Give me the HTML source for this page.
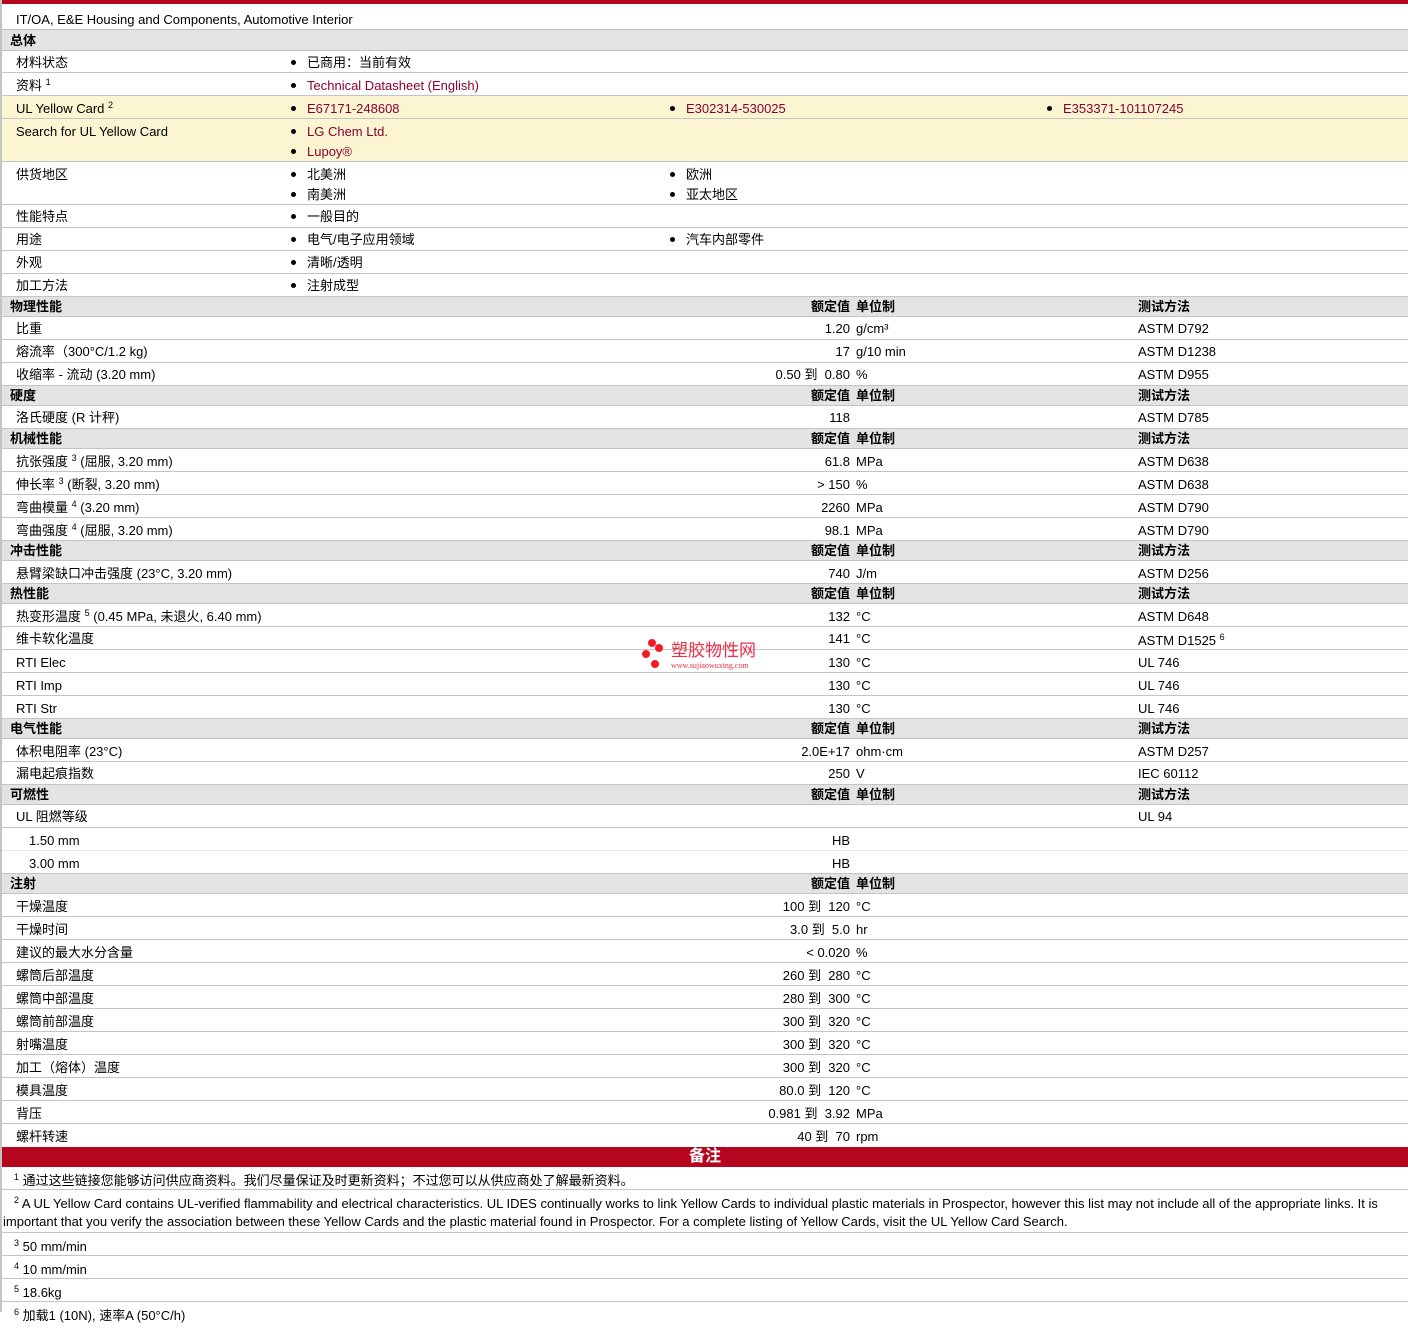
<!DOCTYPE html><html><head><meta charset="utf-8"><style>
body{margin:0;width:1408px;height:1312px;overflow:hidden;background:#fff;font-family:"Liberation Sans","Noto Sans CJK SC",sans-serif;font-size:13px;color:#000;position:relative}
.r{position:absolute;left:2px;right:0;border-bottom:1px solid #c4c4c4;box-sizing:border-box}
.r span{position:absolute;white-space:nowrap}
.h{background:#e3e3e3;font-weight:bold}
.y{background:#fbf5d2}
.l{left:14px}.hl{left:8px}
.b1{left:289px}.b2{left:668px}.b3{left:1045px}
.v{right:558px;text-align:right}.u{left:854px}.t{left:1136px}
a,.a{color:#8b0030}
sup{font-size:9px;vertical-align:5px;line-height:0}
.d::before{content:"";display:inline-block;width:5px;height:5px;border-radius:50%;background:#000;margin-right:11px;vertical-align:2px}
</style></head><body>
<div style="position:absolute;left:0;top:0;width:1408px;height:4px;background:#b5051f"></div>
<div style="position:absolute;left:0;top:0;width:2px;height:1312px;background:#c4c4c4"></div>
<div class="r" style="top:4px;height:26px;line-height:31px"><span class="l">IT/OA, E&amp;E Housing and Components, Automotive Interior</span></div>
<div class="r h" style="top:30px;height:21px;line-height:21px"><span class="hl">总体</span></div>
<div class="r" style="top:51px;height:22px;line-height:23px"><span class="l">材料状态</span><span class="b1 d">已商用：当前有效</span></div>
<div class="r" style="top:73px;height:23px;line-height:25px"><span class="l">资料 <sup>1</sup></span><span class="b1 d"><span class="a" style="position:static">Technical Datasheet (English)</span></span></div>
<div class="r y" style="top:96px;height:23px;line-height:25px"><span class="l">UL Yellow Card <sup>2</sup></span><span class="b1 d"><span class="a" style="position:static">E67171-248608</span></span><span class="b2 d"><span class="a" style="position:static">E302314-530025</span></span><span class="b3 d"><span class="a" style="position:static">E353371-101107245</span></span></div>
<div class="r y" style="top:119px;height:43px;line-height:20px"><span class="l" style="top:3px">Search for UL Yellow Card</span><span class="b1 d" style="top:3px"><span class="a" style="position:static">LG Chem Ltd.</span></span><span class="b1 d" style="top:23px"><span class="a" style="position:static">Lupoy®</span></span></div>
<div class="r" style="top:162px;height:43px;line-height:20px"><span class="l" style="top:3px">供货地区</span><span class="b1 d" style="top:3px">北美洲</span><span class="b1 d" style="top:23px">南美洲</span><span class="b2 d" style="top:3px">欧洲</span><span class="b2 d" style="top:23px">亚太地区</span></div>
<div class="r" style="top:205px;height:23px;line-height:24px"><span class="l">性能特点</span><span class="b1 d">一般目的</span></div>
<div class="r" style="top:228px;height:23px;line-height:24px"><span class="l">用途</span><span class="b1 d">电气/电子应用领域</span><span class="b2 d">汽车内部零件</span></div>
<div class="r" style="top:251px;height:23px;line-height:24px"><span class="l">外观</span><span class="b1 d">清晰/透明</span></div>
<div class="r" style="top:274px;height:23px;line-height:24px"><span class="l">加工方法</span><span class="b1 d">注射成型</span></div>

<div class="r h" style="top:297px;height:20px;line-height:19px"><span class="hl">物理性能</span><span class="v">额定值</span><span class="u">单位制</span><span class="t">测试方法</span></div>
<div class="r" style="top:317px;height:23px;line-height:24px"><span class="l">比重</span><span class="v">1.20</span><span class="u">g/cm³</span><span class="t">ASTM D792</span></div>
<div class="r" style="top:340px;height:23px;line-height:24px"><span class="l">熔流率（300°C/1.2 kg)</span><span class="v">17</span><span class="u">g/10 min</span><span class="t">ASTM D1238</span></div>
<div class="r" style="top:363px;height:23px;line-height:24px"><span class="l">收缩率 - 流动 (3.20 mm)</span><span class="v">0.50 到 &nbsp;0.80</span><span class="u">%</span><span class="t">ASTM D955</span></div>
<div class="r h" style="top:386px;height:20px;line-height:19px"><span class="hl">硬度</span><span class="v">额定值</span><span class="u">单位制</span><span class="t">测试方法</span></div>
<div class="r" style="top:406px;height:23px;line-height:24px"><span class="l">洛氏硬度 (R 计秤)</span><span class="v">118</span><span class="t">ASTM D785</span></div>
<div class="r h" style="top:429px;height:20px;line-height:19px"><span class="hl">机械性能</span><span class="v">额定值</span><span class="u">单位制</span><span class="t">测试方法</span></div>
<div class="r" style="top:449px;height:23px;line-height:26px"><span class="l">抗张强度 <sup>3</sup> (屈服, 3.20 mm)</span><span class="v">61.8</span><span class="u">MPa</span><span class="t">ASTM D638</span></div>
<div class="r" style="top:472px;height:23px;line-height:26px"><span class="l">伸长率 <sup>3</sup> (断裂, 3.20 mm)</span><span class="v">&gt; 150</span><span class="u">%</span><span class="t">ASTM D638</span></div>
<div class="r" style="top:495px;height:23px;line-height:26px"><span class="l">弯曲模量 <sup>4</sup> (3.20 mm)</span><span class="v">2260</span><span class="u">MPa</span><span class="t">ASTM D790</span></div>
<div class="r" style="top:518px;height:23px;line-height:26px"><span class="l">弯曲强度 <sup>4</sup> (屈服, 3.20 mm)</span><span class="v">98.1</span><span class="u">MPa</span><span class="t">ASTM D790</span></div>
<div class="r h" style="top:541px;height:20px;line-height:19px"><span class="hl">冲击性能</span><span class="v">额定值</span><span class="u">单位制</span><span class="t">测试方法</span></div>
<div class="r" style="top:561px;height:23px;line-height:25px"><span class="l">悬臂梁缺口冲击强度 (23°C, 3.20 mm)</span><span class="v">740</span><span class="u">J/m</span><span class="t">ASTM D256</span></div>
<div class="r h" style="top:584px;height:20px;line-height:19px"><span class="hl">热性能</span><span class="v">额定值</span><span class="u">单位制</span><span class="t">测试方法</span></div>
<div class="r" style="top:604px;height:23px;line-height:26px"><span class="l">热变形温度 <sup>5</sup> (0.45 MPa, 未退火, 6.40 mm)</span><span class="v">132</span><span class="u">°C</span><span class="t">ASTM D648</span></div>
<div class="r" style="top:627px;height:23px;line-height:23px"><span class="l">维卡软化温度</span><span class="v">141</span><span class="u">°C</span><span class="t" style="top:2px">ASTM D1525 <sup>6</sup></span></div>
<div class="r" style="top:650px;height:23px;line-height:25px"><span class="l">RTI Elec</span><span class="v">130</span><span class="u">°C</span><span class="t">UL 746</span></div>
<div class="r" style="top:673px;height:23px;line-height:25px"><span class="l">RTI Imp</span><span class="v">130</span><span class="u">°C</span><span class="t">UL 746</span></div>
<div class="r" style="top:696px;height:23px;line-height:25px"><span class="l">RTI Str</span><span class="v">130</span><span class="u">°C</span><span class="t">UL 746</span></div>
<div class="r h" style="top:719px;height:20px;line-height:19px"><span class="hl">电气性能</span><span class="v">额定值</span><span class="u">单位制</span><span class="t">测试方法</span></div>
<div class="r" style="top:739px;height:23px;line-height:25px"><span class="l">体积电阻率 (23°C)</span><span class="v">2.0E+17</span><span class="u">ohm·cm</span><span class="t">ASTM D257</span></div>
<div class="r" style="top:762px;height:23px;line-height:24px"><span class="l">漏电起痕指数</span><span class="v">250</span><span class="u">V</span><span class="t">IEC 60112</span></div>
<div class="r h" style="top:785px;height:20px;line-height:19px"><span class="hl">可燃性</span><span class="v">额定值</span><span class="u">单位制</span><span class="t">测试方法</span></div>
<div class="r" style="top:805px;height:23px;line-height:24px"><span class="l">UL 阻燃等级</span><span class="t">UL 94</span></div>
<div class="r" style="top:828px;height:23px;line-height:25px;border-bottom-color:#e4e4e4"><span style="left:27px">1.50 mm</span><span class="v">HB</span></div>
<div class="r" style="top:851px;height:23px;line-height:25px"><span style="left:27px">3.00 mm</span><span class="v">HB</span></div>
<div class="r h" style="top:874px;height:20px;line-height:19px"><span class="hl">注射</span><span class="v">额定值</span><span class="u">单位制</span></div>
<div class="r" style="top:894px;height:23px;line-height:25px"><span class="l">干燥温度</span><span class="v">100 到 &nbsp;120</span><span class="u">°C</span></div>
<div class="r" style="top:917px;height:23px;line-height:25px"><span class="l">干燥时间</span><span class="v">3.0 到 &nbsp;5.0</span><span class="u">hr</span></div>
<div class="r" style="top:940px;height:23px;line-height:25px"><span class="l">建议的最大水分含量</span><span class="v">&lt; 0.020</span><span class="u">%</span></div>
<div class="r" style="top:963px;height:23px;line-height:25px"><span class="l">螺筒后部温度</span><span class="v">260 到 &nbsp;280</span><span class="u">°C</span></div>
<div class="r" style="top:986px;height:23px;line-height:25px"><span class="l">螺筒中部温度</span><span class="v">280 到 &nbsp;300</span><span class="u">°C</span></div>
<div class="r" style="top:1009px;height:23px;line-height:25px"><span class="l">螺筒前部温度</span><span class="v">300 到 &nbsp;320</span><span class="u">°C</span></div>
<div class="r" style="top:1032px;height:23px;line-height:25px"><span class="l">射嘴温度</span><span class="v">300 到 &nbsp;320</span><span class="u">°C</span></div>
<div class="r" style="top:1055px;height:23px;line-height:25px"><span class="l">加工（熔体）温度</span><span class="v">300 到 &nbsp;320</span><span class="u">°C</span></div>
<div class="r" style="top:1078px;height:23px;line-height:25px"><span class="l">模具温度</span><span class="v">80.0 到 &nbsp;120</span><span class="u">°C</span></div>
<div class="r" style="top:1101px;height:23px;line-height:25px"><span class="l">背压</span><span class="v">0.981 到 &nbsp;3.92</span><span class="u">MPa</span></div>
<div class="r" style="top:1124px;height:23px;line-height:25px;border:0"><span class="l">螺杆转速</span><span class="v">40 到 &nbsp;70</span><span class="u">rpm</span></div>
<div style="position:absolute;left:2px;right:0;top:1147px;height:20px;background:#b5051f;color:#fff;font-size:16px;font-weight:bold;text-align:center;line-height:20px">备注</div>
<div class="r" style="top:1167px;height:23px;line-height:27px"><span class="l" style="left:12px"><sup>1</sup> 通过这些链接您能够访问供应商资料。我们尽量保证及时更新资料；不过您可以从供应商处了解最新资料。</span></div>
<div class="r" style="top:1190px;height:43px;line-height:18px"><span style="left:12px;top:5px"><sup>2</sup> A UL Yellow Card contains UL-verified flammability and electrical characteristics. UL IDES continually works to link Yellow Cards to individual plastic materials in Prospector, however this list may not include all of the appropriate links. It is</span><span style="left:1px;top:23px">important that you verify the association between these Yellow Cards and the plastic material found in Prospector. For a complete listing of Yellow Cards, visit the UL Yellow Card Search.</span></div>
<div class="r" style="top:1233px;height:23px;line-height:27px"><span style="left:12px"><sup>3</sup> 50 mm/min</span></div>
<div class="r" style="top:1256px;height:23px;line-height:27px"><span style="left:12px"><sup>4</sup> 10 mm/min</span></div>
<div class="r" style="top:1279px;height:23px;line-height:27px"><span style="left:12px"><sup>5</sup> 18.6kg</span></div>
<div class="r" style="top:1302px;height:23px;line-height:27px;border:0"><span style="left:12px"><sup>6</sup> 加载1 (10N), 速率A (50°C/h)</span></div>
<div style="position:absolute;left:642px;top:639px;width:130px;height:34px">
<div style="position:absolute;left:6px;top:0;width:8px;height:8px;border-radius:50%;background:#f01c24"></div>
<div style="position:absolute;left:13px;top:5px;width:8px;height:8px;border-radius:50%;background:#f01c24"></div>
<div style="position:absolute;left:0;top:11px;width:8px;height:8px;border-radius:50%;background:#f01c24"></div>
<div style="position:absolute;left:9px;top:21px;width:8px;height:8px;border-radius:50%;background:#f01c24"></div>
<div style="position:absolute;left:29px;top:2px;color:#e8304a;font-size:17px;line-height:20px;white-space:nowrap">塑胶物性网</div>
<div style="position:absolute;left:29px;top:22px;color:#e8304a;font-size:8px;font-family:'Liberation Serif',serif;white-space:nowrap">www.sujiaowuxing.com</div>
</div>
</body></html>
